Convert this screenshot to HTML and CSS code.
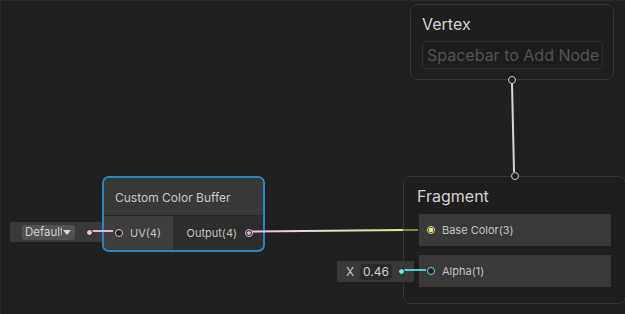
FILE: index.html
```html
<!DOCTYPE html>
<html lang="en">
<head>
    <meta charset="UTF-8">
    <title>Shader Graph</title>
    <link rel="stylesheet" href="styles.css">
</head>
<body>
    <div class="canvas">
        <svg class="wires" width="625" height="314" viewBox="0 0 625 314">
            <defs>
                <linearGradient id="colorWire" x1="252" y1="0" x2="403" y2="0" gradientUnits="userSpaceOnUse">
                    <stop offset="0" stop-color="#e9bde6"/>
                    <stop offset="0.35" stop-color="#eed8d8"/>
                    <stop offset="1" stop-color="#e9e78c"/>
                </linearGradient>
            </defs>
            <!-- vertex -> fragment -->
            <path d="M512 83 L514 172" stroke="#d6d6d6" stroke-width="2" fill="none"/>
            <!-- default uv -> uv port -->
            <path d="M89 231 L113 231" stroke="#e3b2dd" stroke-width="2"/>
            <!-- output -> base color -->
            <path d="M252 231.5 L403 230" stroke="url(#colorWire)" stroke-width="2" fill="none"/>
            <path d="M403 230 L418 230" stroke="#85844f" stroke-width="2"/>
            <!-- x value -> alpha -->
            <path d="M403 270 L426 270" stroke="#5dc9d6" stroke-width="2"/>
        </svg>

        <div class="node master vertex">
            <div class="master-title">Vertex</div>
            <div class="add-hint">Spacebar to Add Node</div>
            <span class="port flow bottom"></span>
        </div>

        <div class="node master fragment">
            <span class="port flow top"></span>
            <div class="master-title">Fragment</div>
            <div class="block">
                <span class="port yellow connected"></span>
                <span class="label">Base Color(3)</span>
            </div>
            <div class="block">
                <span class="port cyan"></span>
                <span class="label">Alpha(1)</span>
            </div>
        </div>

        <div class="node custom selected">
            <div class="custom-title">Custom Color Buffer</div>
            <div class="custom-row">
                <div class="inputs">
                    <span class="port pink"></span>
                    <span class="label">UV(4)</span>
                </div>
                <div class="outputs">
                    <span class="label">Output(4)</span>
                    <span class="port pink connected"></span>
                </div>
            </div>
        </div>

        <div class="inline-field uv-field">
            <div class="dropdown"><span class="dropdown-text">Default</span><span class="caret"></span></div>
            <span class="dot pink-dot"></span>
        </div>

        <div class="inline-field x-field">
            <span class="axis">X</span>
            <span class="value">0.46</span>
            <span class="dot cyan-dot"></span>
        </div>
    </div>
</body>
</html>
```

FILE: styles.css
```css
body {
    margin: 0;
    background: #202020;
    font-family: Inter, "Noto Sans", sans-serif;
    color: #c4c4c4;
    overflow: hidden;
}

.canvas {
    position: relative;
    width: 625px;
    height: 314px;
    box-sizing: border-box;
    border-top: 1px solid #2c2c2c;
    border-left: 1px solid #2a2a2a;
    background: #202020;
}

.wires {
    position: absolute;
    left: -1px;
    top: -1px;
    z-index: 2;
}

.node {
    position: absolute;
    box-sizing: border-box;
}

.label {
    font-size: 11px;
    color: #c2c2c2;
}

/* master stack nodes */
.master {
    background: rgba(30, 30, 30, 0.85);
    border: 1px solid #363636;
    border-radius: 8px;
}

.master-title {
    font-size: 16px;
    color: #d2d2d2;
    line-height: 20px;
}

.vertex {
    left: 409px;
    top: 3px;
    width: 204px;
    height: 76px;
    padding: 9px 10px 0 11px;
}

.add-hint {
    margin-top: 7px;
    height: 28px;
    box-sizing: border-box;
    border: 1px solid #2f2f2f;
    border-radius: 5px;
    background: #1d1d1d;
    font-size: 16px;
    line-height: 26px;
    padding-left: 4px;
    color: #545454;
    white-space: nowrap;
    overflow: hidden;
}

.fragment {
    left: 402px;
    top: 175px;
    width: 223px;
    height: 128px;
    padding: 9px 14px 0 15px;
    display: flex;
    flex-direction: column;
}

.fragment .master-title {
    margin-left: -2px;
    margin-bottom: 8px;
}

.block {
    height: 32px;
    width: 192px;
    background: #393939;
    display: flex;
    align-items: center;
    gap: 7px;
    padding-left: 8px;
    box-sizing: border-box;
    margin-bottom: 9px;
}

/* ports */
.port {
    position: relative;
    z-index: 3;
    width: 6px;
    height: 6px;
    border-radius: 50%;
    border: 1.5px solid #c8c8c8;
    background: #1e1e1e;
    flex: none;
}

.port.flow {
    position: absolute;
    left: 97px;
}

.port.bottom {
    bottom: -5px;
    left: 97px;
}

.port.top {
    top: -5px;
    left: 107px;
}

.port.yellow {
    border-color: #e8e48a;
    background: #2c2c1c;
}

.port.yellow.connected {
    background: radial-gradient(circle, #e8e48a 0 2px, #333 2.5px);
}

.port.cyan {
    border-color: #62cfdc;
}

.port.pink {
    border-color: #e6b6e0;
}

.port.pink.connected {
    background: radial-gradient(circle, #e6b6e0 0 1.5px, #2e2e2e 2px);
}

/* custom function node */
.custom {
    left: 101px;
    top: 175px;
    width: 163px;
    height: 76px;
    border: 2px solid #2a86c2;
    border-radius: 7px;
    background: #2d2d2d;
    overflow: hidden;
    display: flex;
    flex-direction: column;
}

.custom-title {
    height: 37px;
    background: #383838;
    border-bottom: 1px solid #262626;
    font-size: 12px;
    line-height: 40px;
    padding-left: 11px;
    color: #c8c8c8;
    flex: none;
}

.custom-row {
    flex: 1;
    display: flex;
}

.inputs {
    width: 69px;
    background: #3d3d3d;
    display: flex;
    align-items: center;
    gap: 7px;
    padding-left: 11px;
    box-sizing: border-box;
}

.outputs {
    flex: 1;
    display: flex;
    align-items: center;
    justify-content: flex-end;
    gap: 8px;
    padding-right: 10px;
}

/* inline property fields */
.inline-field {
    position: absolute;
    background: #393939;
    display: flex;
    align-items: center;
    box-sizing: border-box;
}

.uv-field {
    left: 9px;
    top: 221px;
    width: 92px;
    height: 20px;
    padding-left: 12px;
}

.dropdown {
    width: 53px;
    height: 15px;
    box-sizing: border-box;
    background: #515151;
    border-radius: 3px;
    font-size: 11.5px;
    line-height: 15px;
    padding-left: 3px;
    color: #cfcfcf;
    display: flex;
    align-items: center;
    white-space: nowrap;
}

.dropdown-text {
    width: 37px;
    overflow: hidden;
}

.caret {
    width: 0;
    height: 0;
    margin-left: 1px;
    border-left: 4px solid transparent;
    border-right: 4px solid transparent;
    border-top: 5px solid #d8d8d8;
}

.dot {
    position: relative;
    z-index: 3;
    width: 5px;
    height: 5px;
    border-radius: 50%;
    border: 1px solid #1a1a1a;
    margin-left: auto;
    margin-right: 9px;
}

.pink-dot {
    background: #f0c0ea;
}

.cyan-dot {
    background: #6ae0ee;
}

.x-field {
    left: 336px;
    top: 260px;
    width: 77px;
    height: 21px;
    padding-left: 9px;
}

.axis {
    font-size: 12px;
    color: #c8c8c8;
    width: 14px;
}

.value {
    background: #2a2a2a;
    border-radius: 3px;
    height: 16px;
    line-height: 16px;
    font-size: 12px;
    padding: 0 3px;
    color: #cfcfcf;
}
```
